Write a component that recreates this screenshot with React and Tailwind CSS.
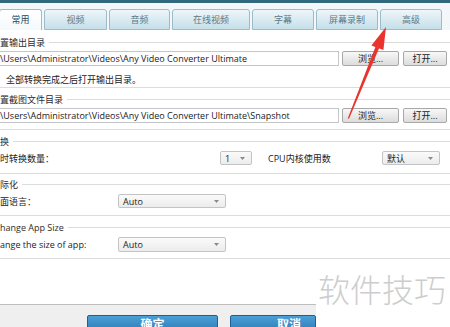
import React from 'react';

const font = { fontFamily: '"Open Sans", "Noto Sans CJK SC", sans-serif' };

const tabs = [
  { label: '常用', w: 'w-[43px]', active: true },
  { label: '视频', w: 'w-[63px]' },
  { label: '音频', w: 'w-[61px]' },
  { label: '在线视频', w: 'w-[78px]' },
  { label: '字幕', w: 'w-[62px]' },
  { label: '屏幕录制', w: 'w-[62px]' },
  { label: '高级', w: 'w-[62px]' },
];

function Header({ children, className = '' }) {
  return (
    <div className={`flex items-center h-[12px] ${className}`}>
      <span className="text-[9px] leading-none text-[#2b2b2b] whitespace-nowrap pr-[4px]">{children}</span>
      <div className="flex-1 h-px bg-[#dcdcdc]" />
    </div>
  );
}

function Divider({ className = '' }) {
  return <div className={`h-px bg-[#dcdcdc] ${className}`} />;
}

function GrayButton({ children, className = '' }) {
  return (
    <div className={`h-[15px] flex items-center justify-center border border-[#a8a8a8] rounded-[2px] bg-gradient-to-b from-[#f8f8f8] to-[#dcdcdc] text-[9px] text-[#222] ${className}`}>
      {children}
    </div>
  );
}

function Select({ value, className = '' }) {
  return (
    <div className={`h-[14px] flex items-center justify-between border border-[#c4c4c4] rounded-[2px] bg-gradient-to-b from-[#fafafa] to-[#ececec] pl-[4px] pr-[6px] ${className}`}>
      <span className="text-[9px] leading-none text-[#222]">{value}</span>
      <svg width="5" height="3" viewBox="0 0 5 3">
        <polygon points="0,0 5,0 2.5,3" fill="#8a8a8a" />
      </svg>
    </div>
  );
}

function PathRow({ path, className = '' }) {
  return (
    <div className={`flex items-center ${className}`}>
      <div className="w-[339px] h-[15px] border border-l-0 border-[#c4c6cc] bg-white flex items-center overflow-hidden">
        <span className="text-[9px] leading-none text-[#1a1a1a] whitespace-nowrap">{path}</span>
      </div>
      <GrayButton className="ml-[3px] w-[57px]">浏览...</GrayButton>
      <GrayButton className="ml-[4px] w-[44px]">打开...</GrayButton>
    </div>
  );
}

export default function App() {
  return (
    <div className="relative w-[450px] h-[327px] overflow-hidden bg-white" style={font}>
      {/* top strip */}
      <div className="h-[3px] bg-[#33697d]" />
      <div className="h-[6px] bg-[#f3f7f9]" />

      {/* tabs */}
      <div className="flex h-[21px] -ml-[1px] gap-[2px] bg-[#f3f7f9]">
        {tabs.map((t) => (
          <div
            key={t.label}
            className={`${t.w} shrink-0 flex items-center justify-center rounded-t-[3px] border border-[#9dbccb] text-[9px] ${
              t.active
                ? 'border-b-0 bg-gradient-to-b from-[#ffffff] to-[#f4f9fb] text-[#2a4652]'
                : 'bg-gradient-to-b from-[#eef6f9] to-[#c5dfe9] text-[#5c7a87]'
            }`}
          >
            {t.label}
          </div>
        ))}
      </div>

      {/* group 1 */}
      <Header className="mt-[6px]">置输出目录</Header>
      <PathRow className="mt-[3px]" path="\Users\Administrator\Videos\Any Video Converter Ultimate" />
      <div className="mt-[7px] h-[12px] flex items-center pl-[6px]">
        <span className="text-[9px] leading-none text-[#222]">全部转换完成之后打开输出目录。</span>
      </div>
      <Divider className="mt-[2px]" />

      {/* group 2 */}
      <Header className="mt-[5px]">置截图文件目录</Header>
      <PathRow className="mt-[3px]" path="\Users\Administrator\Videos\Any Video Converter Ultimate\Snapshot" />
      <Divider className="mt-[6px]" />

      {/* group 3 */}
      <Header className="mt-[5px]">换</Header>
      <div className="mt-[4px] h-[14px] flex items-center">
        <span className="w-[220px] text-[9px] leading-none text-[#222]">时转换数量：</span>
        <Select value="1" className="w-[32px]" />
        <span className="ml-[16px] w-[114px] text-[9px] leading-none text-[#222]">CPU内核使用数</span>
        <Select value="默认" className="w-[58px]" />
      </div>
      <Divider className="mt-[8px]" />

      {/* group 4 */}
      <Header className="mt-[4px]">际化</Header>
      <div className="mt-[4px] h-[14px] flex items-center">
        <span className="w-[118px] text-[9px] leading-none text-[#222]">面语言：</span>
        <Select value="Auto" className="w-[108px]" />
      </div>
      <Divider className="mt-[7px]" />

      {/* group 5 */}
      <Header className="mt-[5px]">hange App Size</Header>
      <div className="mt-[4px] h-[15px] flex items-center">
        <span className="w-[118px] text-[9px] leading-none text-[#222]">ange the size of app:</span>
        <Select value="Auto" className="w-[108px] h-[15px]" />
      </div>
      <Divider className="mt-[6px]" />

      {/* footer */}
      <div className="h-[45px]" />
      <div className="h-px bg-[#bdbdbd]" />
      <div className="h-[30px] bg-[#efefef] flex pt-[10px]">
        <div className="ml-[87px] w-[131px] h-[26px] rounded-[2px] border border-[#1f5f93] bg-gradient-to-b from-[#4a9fd6] to-[#1f6aa8] flex justify-center pt-[3px]">
          <span className="text-[12px] font-bold text-white leading-none">确定</span>
        </div>
        <div className="ml-[12px] w-[86px] h-[26px] rounded-[2px] border border-[#1f5f93] bg-gradient-to-b from-[#4a9fd6] to-[#1f6aa8] flex justify-end pr-[14px] pt-[3px]">
          <span className="text-[12px] font-bold text-white leading-none">取消</span>
        </div>
      </div>

      {/* watermark */}
      <div className="absolute left-[316px] top-[268px] w-[134px] h-[59px] bg-white flex items-start pt-[4px] pl-[2px]">
        <span className="text-[32px] leading-none font-light text-[#cdcdcd] whitespace-nowrap" style={{ fontFamily: '"Noto Sans CJK SC", sans-serif' }}>
          软件技巧
        </span>
      </div>

      {/* red arrow */}
      <svg className="absolute left-0 top-0 pointer-events-none" width="450" height="327" viewBox="0 0 450 327">
        <polygon points="386,27 371.4,45.4 383.4,50" fill="#e8342c" />
        <polygon points="379.2,48 375.6,46.4 347.8,118.3 349,118.8" fill="#e8342c" />
      </svg>
    </div>
  );
}
